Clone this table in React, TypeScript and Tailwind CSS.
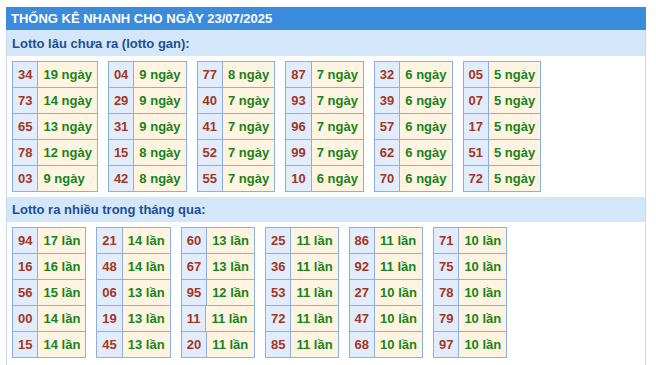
const ganTables: [string, string][][] = [
  [['34', '19 ngày'], ['73', '14 ngày'], ['65', '13 ngày'], ['78', '12 ngày'], ['03', '9 ngày']],
  [['04', '9 ngày'], ['29', '9 ngày'], ['31', '9 ngày'], ['15', '8 ngày'], ['42', '8 ngày']],
  [['77', '8 ngày'], ['40', '7 ngày'], ['41', '7 ngày'], ['52', '7 ngày'], ['55', '7 ngày']],
  [['87', '7 ngày'], ['93', '7 ngày'], ['96', '7 ngày'], ['99', '7 ngày'], ['10', '6 ngày']],
  [['32', '6 ngày'], ['39', '6 ngày'], ['57', '6 ngày'], ['62', '6 ngày'], ['70', '6 ngày']],
  [['05', '5 ngày'], ['07', '5 ngày'], ['17', '5 ngày'], ['51', '5 ngày'], ['72', '5 ngày']],
]

const hotTables: [string, string][][] = [
  [['94', '17 lần'], ['16', '16 lần'], ['56', '15 lần'], ['00', '14 lần'], ['15', '14 lần']],
  [['21', '14 lần'], ['48', '14 lần'], ['06', '13 lần'], ['19', '13 lần'], ['45', '13 lần']],
  [['60', '13 lần'], ['67', '13 lần'], ['95', '12 lần'], ['11', '11 lần'], ['20', '11 lần']],
  [['25', '11 lần'], ['36', '11 lần'], ['53', '11 lần'], ['72', '11 lần'], ['85', '11 lần']],
  [['86', '11 lần'], ['92', '11 lần'], ['27', '10 lần'], ['47', '10 lần'], ['68', '10 lần']],
  [['71', '10 lần'], ['75', '10 lần'], ['78', '10 lần'], ['79', '10 lần'], ['97', '10 lần']],
]

function LotoTable({ rows }: { rows: [string, string][] }) {
  return (
    <div className="flex flex-col border-t border-l border-[#8eaee0]">
      {rows.map(([num, val], i) => (
        <div key={i} className="flex h-[26px]">
          <div className="flex items-center justify-center px-[5px] bg-[#e1edfc] text-[#a3361f] border-r border-b border-[#8eaee0]">
            {num}
          </div>
          <div className="flex flex-1 items-center justify-start px-[5px] bg-[#fff4e2] text-[#17831a] whitespace-nowrap border-r border-b border-[#8eaee0]">
            {val}
          </div>
        </div>
      ))}
    </div>
  )
}

function Section({ title, tables, tall }: { title: string; tables: [string, string][][]; tall?: boolean }) {
  return (
    <div>
      <div className={`${tall ? 'h-[26px]' : 'h-[25px]'} flex items-center pl-[5px] bg-[#d3e6fa] text-[#1f4f91]`}>
        {title}
      </div>
      <div className="flex items-start gap-[10px] pl-[5px] pt-[5px] pb-[5px]">
        {tables.map((t, i) => (
          <LotoTable key={i} rows={t} />
        ))}
      </div>
    </div>
  )
}

export default function App() {
  return (
    <div
      className="w-[656px] h-[365px] overflow-hidden bg-white text-[13px] font-bold leading-none"
      style={{ fontFamily: '"Liberation Sans", Arial, sans-serif' }}
    >
      <div className="h-[7px]" />
      <div className="ml-[6px] w-[640px]">
        <div className="h-[23px] flex items-center pl-[5px] bg-[#3a8bdc] text-white">
          THỐNG KÊ NHANH CHO NGÀY 23/07/2025
        </div>
        <div className="border-x border-[#c9d8ea] h-[400px]">
          <Section title="Lotto lâu chưa ra (lotto gan):" tables={ganTables} tall />
          <Section title="Lotto ra nhiều trong tháng qua:" tables={hotTables} />
        </div>
      </div>
    </div>
  )
}
